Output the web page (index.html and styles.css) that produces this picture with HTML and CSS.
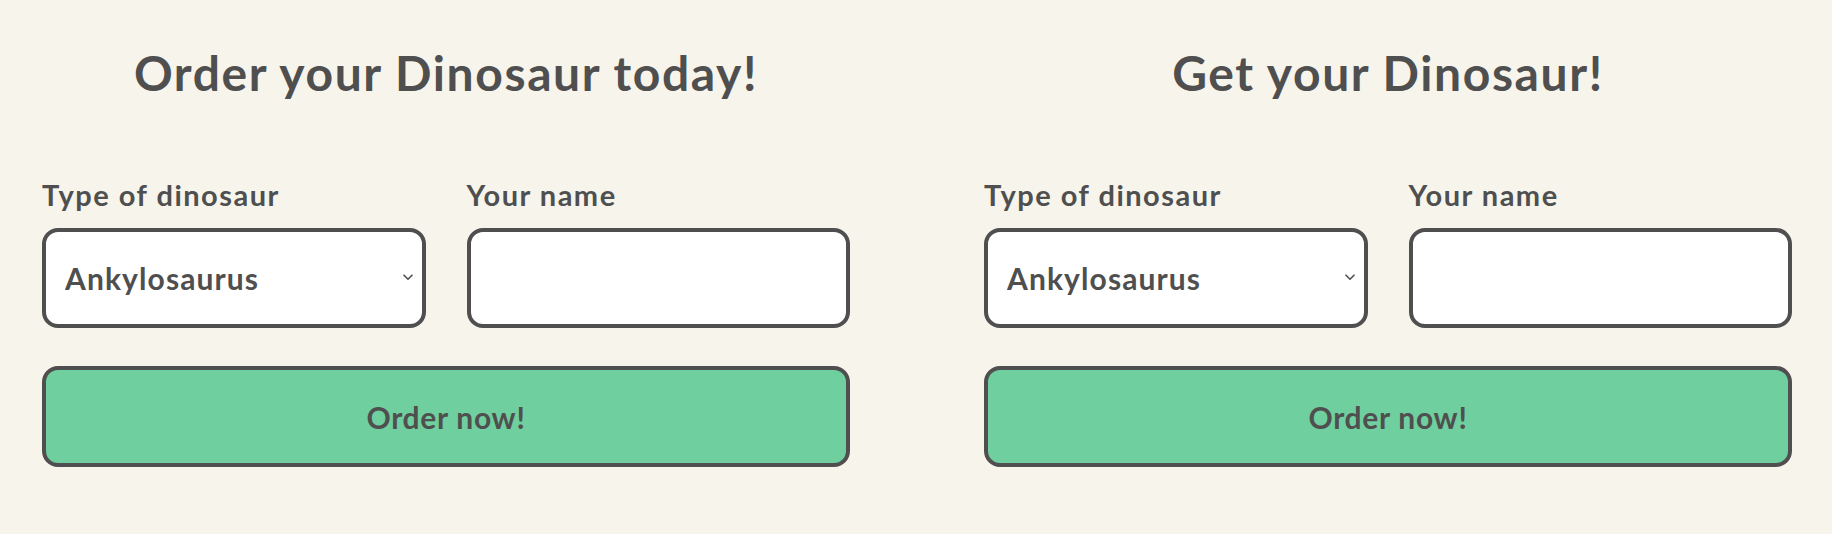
FILE: index.html
```html
<!DOCTYPE html>
<html lang="en">
<head>
<meta charset="utf-8">
<title>Dinosaur order</title>
<link rel="stylesheet" href="styles.css">
</head>
<body>
<main class="page">
  <section class="order">
    <h1 class="title">Order your Dinosaur today!</h1>
    <form class="form">
      <div class="fields">
        <label class="field">
          <span class="label">Type of dinosaur</span>
          <span class="select-wrap">
            <select class="control select">
              <option>Ankylosaurus</option>
              <option>Brachiosaurus</option>
              <option>Stegosaurus</option>
              <option>Triceratops</option>
              <option>Tyrannosaurus</option>
            </select>
            <svg class="chevron" width="10" height="7" viewBox="0 0 10 7"><path d="M1 1.2 L5 5.2 L9 1.2" fill="none" stroke="#4f4f4f" stroke-width="1.6" stroke-linecap="round" stroke-linejoin="round"/></svg>
          </span>
        </label>
        <label class="field">
          <span class="label">Your name</span>
          <input class="control" type="text">
        </label>
      </div>
      <button class="button" type="button">Order now!</button>
    </form>
  </section>
  <section class="order">
    <h1 class="title">Get your Dinosaur!</h1>
    <form class="form">
      <div class="fields">
        <label class="field">
          <span class="label">Type of dinosaur</span>
          <span class="select-wrap">
            <select class="control select">
              <option>Ankylosaurus</option>
              <option>Brachiosaurus</option>
              <option>Stegosaurus</option>
              <option>Triceratops</option>
              <option>Tyrannosaurus</option>
            </select>
            <svg class="chevron" width="10" height="7" viewBox="0 0 10 7"><path d="M1 1.2 L5 5.2 L9 1.2" fill="none" stroke="#4f4f4f" stroke-width="1.6" stroke-linecap="round" stroke-linejoin="round"/></svg>
          </span>
        </label>
        <label class="field">
          <span class="label">Your name</span>
          <input class="control" type="text">
        </label>
      </div>
      <button class="button" type="button">Order now!</button>
    </form>
  </section>
</main>
</body>
</html>
```

FILE: styles.css
```css
* {
  box-sizing: border-box;
}

html, body {
  margin: 0;
  padding: 0;
  background: #f7f4ec;
}

body {
  font-family: Lato, "Open Sans", sans-serif;
  color: #4f4f4f;
}

.page {
  display: grid;
  grid-template-columns: 808px 808px;
  column-gap: 134px;
  padding: 44px 0 0 42px;
}

.order {
  display: flex;
  flex-direction: column;
}

.title {
  margin: 0;
  font-size: 48px;
  line-height: 58px;
  font-weight: 700;
  letter-spacing: 1.6px;
  text-align: center;
}

.form {
  display: flex;
  flex-direction: column;
  gap: 38px;
  margin-top: 75px;
}

.fields {
  display: grid;
  grid-template-columns: 1fr 1fr;
  column-gap: 41px;
}

.field {
  display: flex;
  flex-direction: column;
  gap: 15px;
}

.label {
  font-size: 29px;
  line-height: 36px;
  font-weight: 700;
  letter-spacing: 1.5px;
}

.select-wrap {
  position: relative;
  display: block;
}

.control {
  display: block;
  width: 100%;
  height: 100px;
  margin: 0;
  border: 4px solid #4f4f4f;
  border-radius: 16px;
  background: #ffffff;
  font-family: inherit;
  font-size: 30px;
  font-weight: 700;
  letter-spacing: 1.1px;
  color: #4f4f4f;
  padding: 0 36px 0 19px;
  outline: none;
}

.select {
  appearance: none;
  -webkit-appearance: none;
}

.chevron {
  position: absolute;
  right: 13px;
  top: 46px;
  pointer-events: none;
}

.button {
  display: block;
  width: 100%;
  height: 101px;
  margin: 0;
  border: 4px solid #4f4f4f;
  border-radius: 16px;
  background: #6fcf9f;
  font-family: inherit;
  font-size: 30px;
  font-weight: 700;
  letter-spacing: 0.7px;
  color: #4f4f4f;
}
```
